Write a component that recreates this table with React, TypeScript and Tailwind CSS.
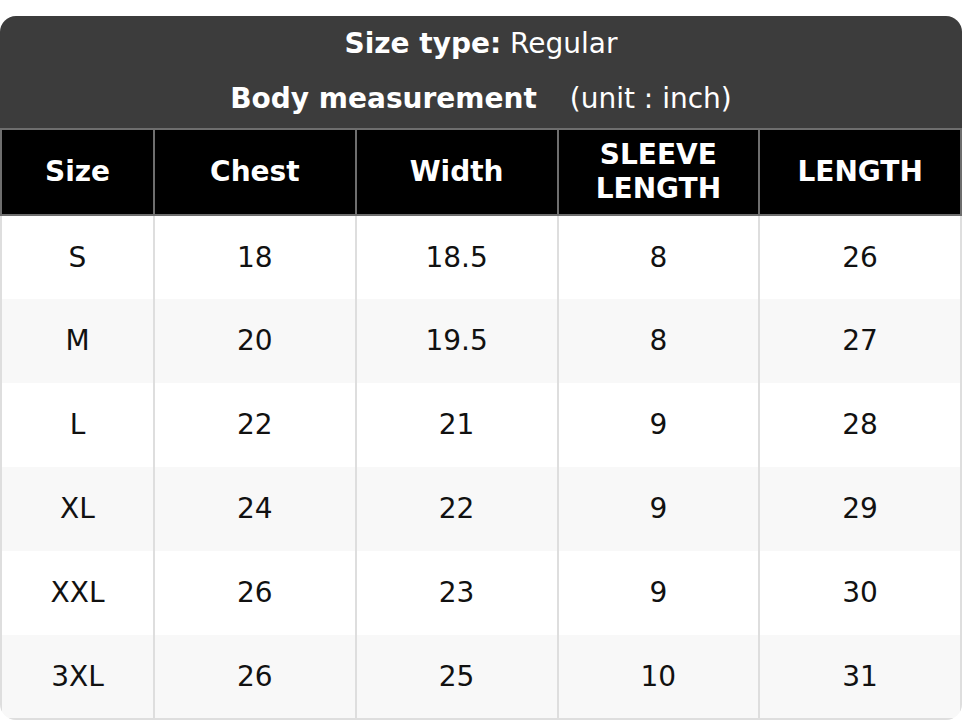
const rows = [
  ["S", "18", "18.5", "8", "26"],
  ["M", "20", "19.5", "8", "27"],
  ["L", "22", "21", "9", "28"],
  ["XL", "24", "22", "9", "29"],
  ["XXL", "26", "23", "9", "30"],
  ["3XL", "26", "25", "10", "31"],
];

const headers = ["Size", "Chest", "Width", "SLEEVE\nLENGTH", "LENGTH"];

export default function App() {
  return (
    <div className="w-[962px] h-[720px] bg-white pt-[16px] font-['DejaVu_Sans',sans-serif]">
      <div className="rounded-[16px] overflow-hidden">
        {/* Caption */}
        <div className="bg-[#3c3c3c] text-white text-[28px] text-center pt-[8px] pb-[9px]">
          <div className="h-[40px] leading-[40px]">
            <span className="font-bold">Size type:</span> Regular
          </div>
          <div className="h-[40px] leading-[40px] mt-[15px]">
            <span className="font-bold">Body measurement</span>
            <span className="ml-[33px]">(unit : inch)</span>
          </div>
        </div>

        <table className="w-full table-fixed border-collapse text-[28px]">
          <colgroup>
            <col className="w-[153px]" />
            <col />
            <col />
            <col />
            <col />
          </colgroup>
          <thead>
            <tr className="h-[86px] bg-black">
              {headers.map((h) => (
                <th
                  key={h}
                  className="border-2 border-[#6e6e6e] text-white font-bold leading-[34px] whitespace-pre-line text-center"
                >
                  {h}
                </th>
              ))}
            </tr>
          </thead>
          <tbody>
            {rows.map((r, i) => (
              <tr key={r[0]} className={i % 2 === 1 ? "h-[84px] bg-[#f8f8f8]" : "h-[84px] bg-white"}>
                {r.map((c, j) => (
                  <td
                    key={j}
                    className={
                      i === rows.length - 1
                        ? "border-x-2 border-b-2 border-[#dedede] text-center text-[#111]"
                        : "border-x-2 border-[#dedede] text-center text-[#111]"
                    }
                  >
                    {c}
                  </td>
                ))}
              </tr>
            ))}
          </tbody>
        </table>
      </div>
    </div>
  );
}
